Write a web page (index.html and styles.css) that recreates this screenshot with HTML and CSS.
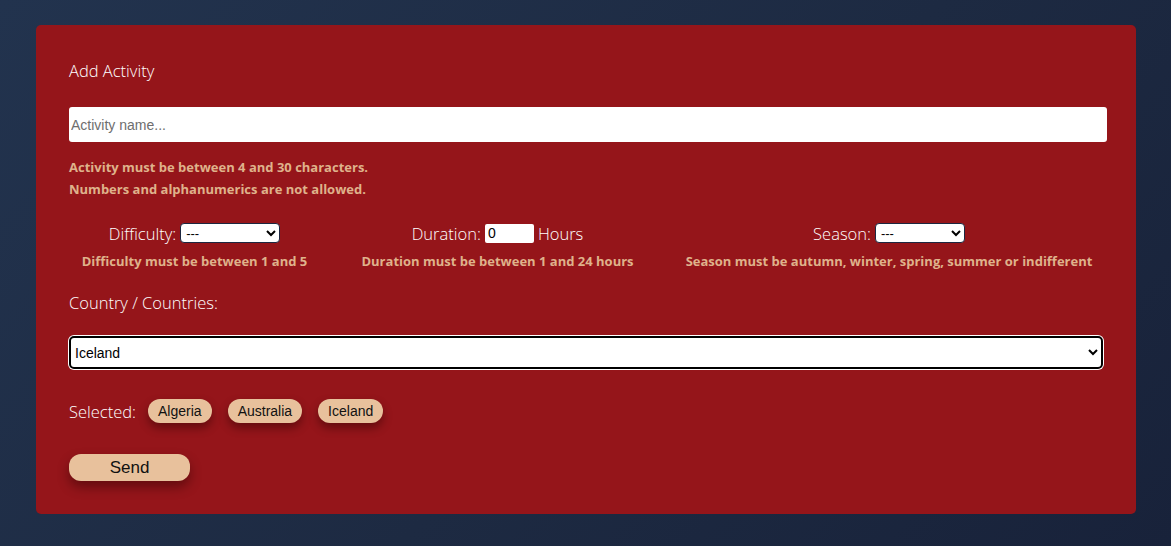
FILE: index.html
```html
<!DOCTYPE html>
<html lang="en">
<head>
<meta charset="utf-8">
<title>Add Activity</title>
<link rel="stylesheet" href="styles.css">
</head>
<body>
<main class="page">
  <form class="card">
    <h2 class="title">Add Activity</h2>
    <input class="name-input" type="text" placeholder="Activity name...">
    <p class="msg first">Activity must be between 4 and 30 characters.</p>
    <p class="msg">Numbers and alphanumerics are not allowed.</p>

    <div class="fields">
      <div class="field f1">
        <div class="field-row">
          <span class="lbl">Difficulty:</span>
          <select class="sel sel-diff"><option>---</option></select>
        </div>
        <p class="msg">Difficulty must be between 1 and 5</p>
      </div>
      <div class="field f2">
        <div class="field-row">
          <span class="lbl">Duration:</span>
          <input class="num" type="text" value="0">
          <span class="lbl">Hours</span>
        </div>
        <p class="msg">Duration must be between 1 and 24 hours</p>
      </div>
      <div class="field f3">
        <div class="field-row">
          <span class="lbl">Season:</span>
          <select class="sel sel-season"><option>---</option></select>
        </div>
        <p class="msg">Season must be autumn, winter, spring, summer or indifferent</p>
      </div>
    </div>

    <div class="lbl countries-lbl">Country / Countries:</div>
    <div class="country-wrap">
      <select class="country"><option>Iceland</option></select>
    </div>

    <div class="selected">
      <span class="lbl">Selected:</span>
      <span class="chip">Algeria</span>
      <span class="chip">Australia</span>
      <span class="chip">Iceland</span>
    </div>

    <button class="send" type="button">Send</button>
  </form>
</main>
</body>
</html>
```
FILE: styles.css
```css
html, body {
  margin: 0;
  padding: 0;
  height: 100%;
}
body {
  background: linear-gradient(135deg, #22334e 0%, #1d2a42 55%, #18223a 100%);
  font-family: "Open Sans", "Segoe UI", sans-serif;
}
.page {
  padding: 25px 35px 32px 36px;
}
.card {
  background: #95151a;
  border-radius: 5px;
  padding: 31px 29px 32px 33px;
  height: 489px;
  box-sizing: border-box;
}
.title {
  margin: 0;
  font-weight: 300;
  font-size: 16.5px;
  color: #ffffff;
  line-height: 30px;
}
.name-input {
  display: block;
  width: 100%;
  box-sizing: border-box;
  height: 35px;
  margin-top: 21px;
  border: none;
  border-radius: 3px;
  background: #fff;
  padding: 0 2px;
  font-family: "Liberation Sans", Arial, sans-serif;
  font-size: 14px;
  outline: none;
}
.name-input::placeholder {
  color: #6e6e6e;
}
.msg {
  margin: 0;
  font-family: "Open Sans", sans-serif;
  font-weight: 700;
  font-size: 13px;
  line-height: 22px;
  color: #dfb28b;
  white-space: nowrap;
}
.msg.first {
  margin-top: 14px;
}
.fields {
  display: flex;
  gap: 54px;
  margin-top: 20px;
  padding-left: 13px;
}
.field {
  display: flex;
  flex-direction: column;
  align-items: center;
  flex: none;
}
.f1 { width: 225px; }
.f2 { width: 273px; }
.f3 { width: 402px; }
.field-row {
  display: flex;
  align-items: center;
  gap: 4px;
  height: 26px;
}
.lbl {
  font-weight: 300;
  font-size: 16.5px;
  color: #ffffff;
}
.sel {
  height: 20px;
  border: 1px solid #1c2740;
  border-radius: 4px;
  background: #fff;
  font-family: "Liberation Sans", Arial, sans-serif;
  font-size: 13px;
  padding: 0 1px;
  color: #000;
}
.sel-diff { width: 100px; }
.sel-season { width: 90px; }
.num {
  width: 49px;
  height: 19px;
  box-sizing: border-box;
  border: none;
  border-radius: 2px;
  padding: 0 3px;
  font-family: "Liberation Sans", Arial, sans-serif;
  font-size: 14px;
  background: #fff;
}
.fields .msg {
  line-height: 16px;
  margin-top: 7px;
}
.countries-lbl {
  margin-top: 20px;
  line-height: 28px;
}
.country-wrap {
  margin-top: 19px;
  padding-right: 4px;
}
.country {
  display: block;
  width: 100%;
  height: 33px;
  box-sizing: border-box;
  border: 2px solid #000;
  border-radius: 5px;
  box-shadow: 0 0 0 1px #fff;
  background: #fff;
  font-family: "Liberation Sans", Arial, sans-serif;
  font-size: 14px;
  padding: 0 2px 0 0;
  color: #000;
}
.selected {
  display: flex;
  align-items: center;
  gap: 16px;
  margin-top: 30px;
}
.selected .lbl {
  margin-right: -4px;
}
.chip {
  background: #e8c19c;
  border-radius: 12px;
  height: 24px;
  line-height: 24px;
  padding: 0 10px;
  font-family: "Liberation Sans", Arial, sans-serif;
  font-size: 14px;
  color: #111;
  box-shadow: 0 5px 10px rgba(40, 0, 0, 0.45);
}
.send {
  display: block;
  margin-top: 31px;
  width: 121px;
  height: 27px;
  border: none;
  border-radius: 12px;
  background: #e8c19c;
  font-family: "Liberation Sans", Arial, sans-serif;
  font-size: 17px;
  color: #111;
  box-shadow: 0 6px 12px rgba(40, 0, 0, 0.45);
  padding: 0;
}
```
